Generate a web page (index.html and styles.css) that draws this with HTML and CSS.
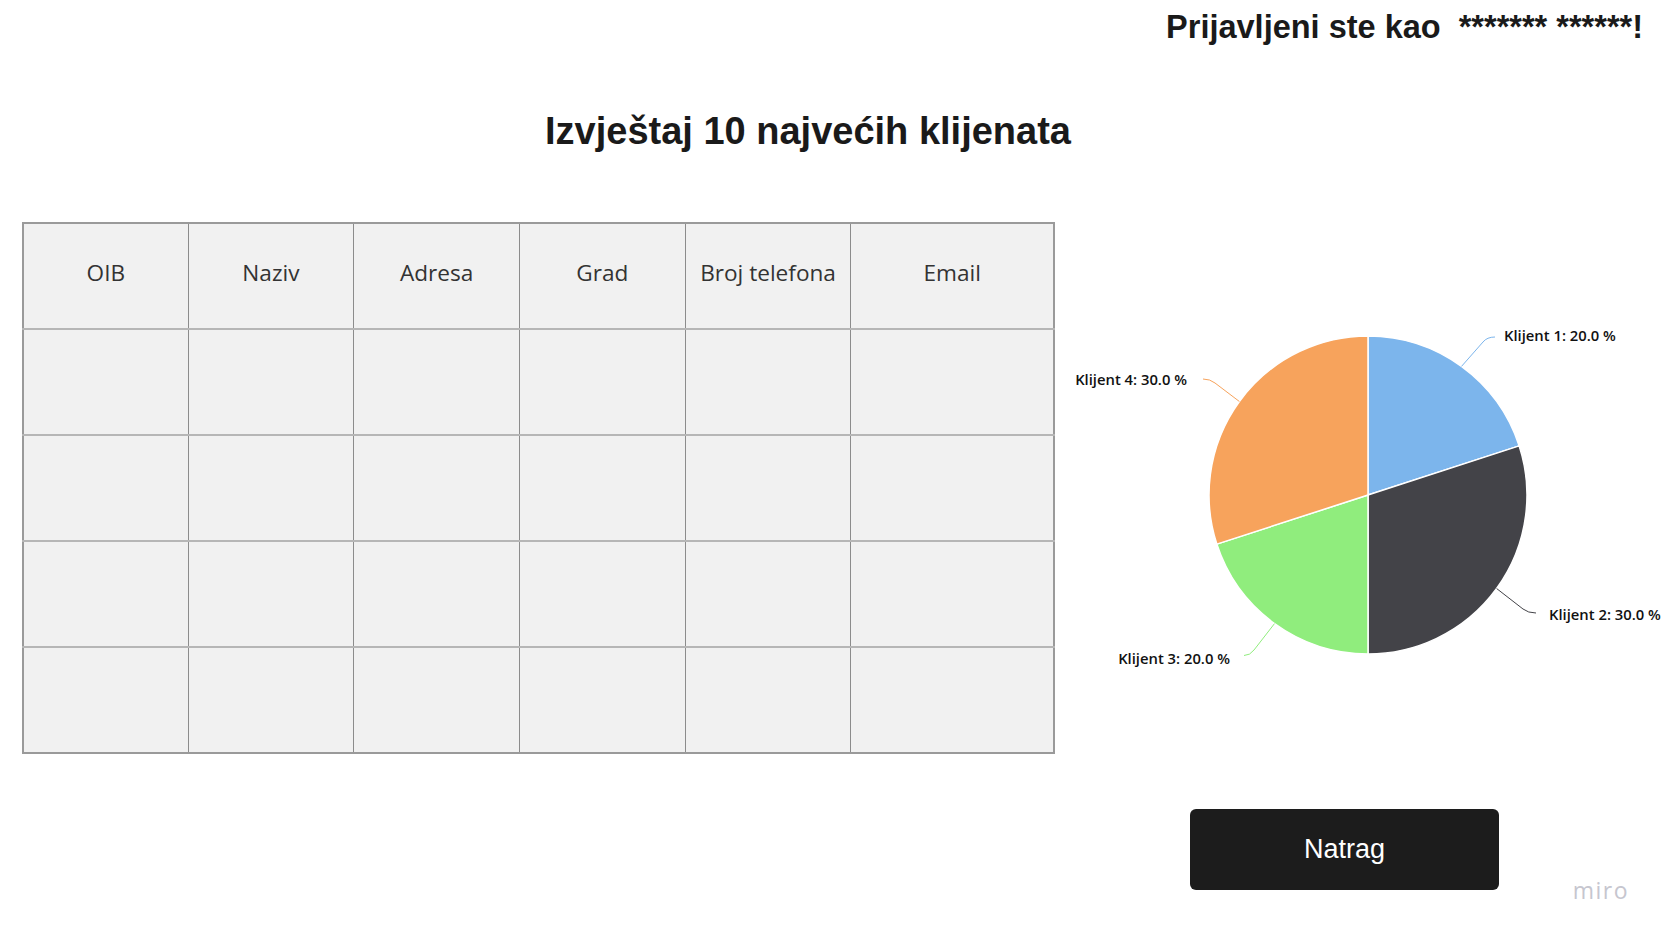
FILE: index.html
```html
<!DOCTYPE html>
<html lang="hr">
<head>
<meta charset="utf-8">
<title>Izvještaj 10 najvećih klijenata</title>
<link rel="stylesheet" href="styles.css">
</head>
<body>
<div class="page">
  <header class="topbar">
    <span class="user">Prijavljeni ste kao&nbsp; ******* ******!</span>
  </header>
  <h1 class="title">Izvještaj 10 najvećih klijenata</h1>
  <main class="content">
    <table class="report">
      <thead>
        <tr>
          <th class="c-first">OIB</th>
          <th class="c-std">Naziv</th>
          <th class="c-std">Adresa</th>
          <th class="c-std">Grad</th>
          <th class="c-std">Broj telefona</th>
          <th class="c-mail">Email</th>
        </tr>
      </thead>
      <tbody>
        <tr><td></td><td></td><td></td><td></td><td></td><td></td></tr>
        <tr><td></td><td></td><td></td><td></td><td></td><td></td></tr>
        <tr><td></td><td></td><td></td><td></td><td></td><td></td></tr>
        <tr><td></td><td></td><td></td><td></td><td></td><td></td></tr>
      </tbody>
    </table>
    <svg class="chart" width="611" height="531" viewBox="0 -2 611 531" xmlns="http://www.w3.org/2000/svg">
      <g class="slices" stroke="#ffffff" stroke-width="1.5" stroke-linejoin="round">
        <path fill="#7cb5ec" d="M313 271 L313 112 A159 159 0 0 1 464.2 221.9 Z"/>
        <path fill="#434348" d="M313 271 L464.2 221.9 A159 159 0 0 1 313 430 Z"/>
        <path fill="#90ed7d" d="M313 271 L313 430 A159 159 0 0 1 161.8 320.1 Z"/>
        <path fill="#f7a35c" d="M313 271 L161.8 320.1 A159 159 0 0 1 313 112 Z"/>
      </g>
      <g class="connectors" fill="none" stroke-width="1">
        <path stroke="#7cb5ec" d="M406.5 142.4 L428 118 Q432 113 440 113"/>
        <path stroke="#434348" d="M441.6 364.5 L468 385 Q473 389 481 389"/>
        <path stroke="#90ed7d" d="M219.5 399.6 L199 426 Q195 431.5 189 431.5"/>
        <path stroke="#f7a35c" d="M184.4 177.5 L160 159 Q155 155 148 155"/>
      </g>
      <g class="labels">
        <text x="449" y="117" text-anchor="start">Klijent 1: 20.0 %</text>
        <text x="494" y="396" text-anchor="start">Klijent 2: 30.0 %</text>
        <text x="175" y="439.5" text-anchor="end">Klijent 3: 20.0 %</text>
        <text x="132" y="160.5" text-anchor="end">Klijent 4: 30.0 %</text>
      </g>
    </svg>
  </main>
  <div class="actions">
    <button class="back" type="button">Natrag</button>
  </div>
  <div class="miro">miro</div>
</div>
</body>
</html>
```
FILE: styles.css
```css
html, body {
  margin: 0;
  padding: 0;
  background: #ffffff;
}

body {
  font-family: "Liberation Sans", Arial, sans-serif;
  color: #1c1c1c;
}

.page {
  position: relative;
  width: 1666px;
  height: 937px;
  overflow: hidden;
}

.topbar {
  display: flex;
  justify-content: flex-end;
  padding: 8px 23px 0 0;
  height: 36px;
}

.user {
  font-size: 32.5px;
  font-weight: 700;
  line-height: 38px;
  white-space: pre;
  color: #1a1a1a;
}

.title {
  margin: 65px 0 0 0;
  width: 1616px;
  text-align: center;
  font-size: 38px;
  font-weight: 700;
  line-height: 44px;
  color: #1a1a1a;
}

.content {
  display: flex;
  align-items: flex-start;
  margin-top: 69px;
  padding-left: 22px;
}

.report {
  border-collapse: collapse;
  background: #f1f1f1;
  border: 2px solid #9a9a9a;
  table-layout: fixed;
}

.report th,
.report td {
  border-left: 1px solid #8c8c8c;
  border-right: 1px solid #8c8c8c;
  border-top: 2px solid #b6b6b6;
  border-bottom: 2px solid #b6b6b6;
  height: 104px;
  padding: 0;
}

.report thead th {
  border-top: 2px solid #9a9a9a;
}

.report tbody tr:last-child td {
  border-bottom: 2px solid #9a9a9a;
}

.report th {
  font-family: "Open Sans", sans-serif;
  font-weight: 400;
  font-size: 22.6px;
  color: #333333;
  text-align: center;
  vertical-align: middle;
  line-height: 26px;
  padding-bottom: 6px;
  height: 98px;
}

.c-first { width: 164px; }
.c-std { width: 165px; }
.c-mail { width: 202px; }

.chart {
  display: block;
  flex: 0 0 auto;
}

.labels text {
  font-family: "Open Sans", sans-serif;
  font-weight: 600;
  font-size: 14.8px;
  fill: #111111;
}

.actions {
  display: flex;
  justify-content: flex-end;
  padding-right: 167px;
  margin-top: 55px;
}

.back {
  width: 309px;
  height: 81px;
  background: #1c1c1c;
  border: none;
  border-radius: 6px;
  color: #ffffff;
  font-family: "Liberation Sans", Arial, sans-serif;
  font-size: 27px;
  cursor: pointer;
}

.miro {
  position: absolute;
  right: 37px;
  bottom: 31px;
  font-family: "Open Sans", sans-serif;
  font-size: 23px;
  letter-spacing: 1.5px;
  color: #c6c6cf;
}
```
